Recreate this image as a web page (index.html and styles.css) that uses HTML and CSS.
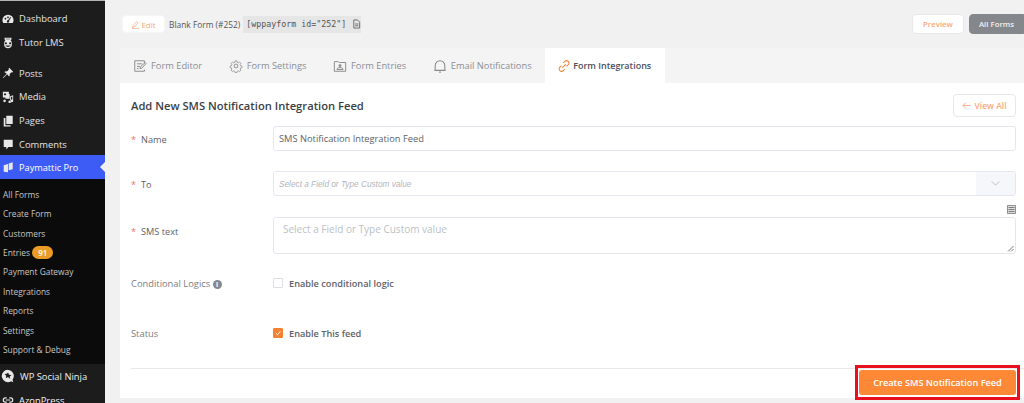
FILE: index.html
```html
<!DOCTYPE html>
<html lang="en">
<head>
<meta charset="utf-8">
<title>Paymattic Pro</title>
<link rel="stylesheet" href="styles.css">
</head>
<body>
<div class="app">
  <aside class="sidebar">
    <ul class="menu menu-top">
      <li class="item"><svg class="mi" viewBox="0 0 14 14"><path fill-rule="evenodd" d="M7 2a6.500 6.500 0 0 0-6.500 6.500c0 1.300.4 2.400 1 3.300h11c.6-.9 1-2 1-3.300A6.500 6.500 0 0 0 7 2zM4 5.500a1 1 0 1 1-.01 0zM7 4a1 1 0 1 1-.01 0zm3.600 1.200L8.200 9.100a1.400 1.400 0 1 1-1.100-.6L9.800 4.800z"/></svg><span>Dashboard</span></li>
      <li class="item"><svg class="mi" viewBox="0 0 14 14"><path fill-rule="evenodd" d="M3 1h8v2l-1 .8c1 .9 1.500 2 1.500 3.200v2c0 2.500-2 4-4.500 4s-4.500-1.500-4.500-4V7c0-1.200.5-2.300 1.500-3.200L3 3zm1.500 1v.6h5V2zM4.500 6a1.300 1.300 0 1 0 .01 0zm5 0a1.300 1.300 0 1 0 .01 0zM4 10c.6 1.200 1.700 1.700 3 1.700s2.400-.5 3-1.700z"/></svg><span>Tutor LMS</span></li>
    </ul>
    <ul class="menu menu-mid">
      <li class="item"><svg class="mi" viewBox="0 0 14 14"><path d="M8.500 1l4.500 4.500-1 .8-.8-.3-2.400 2.200c.5 1.300.2 2.300-.5 3L6 8.500 2 12.500 1 13l.5-1 4-4-2.700-2.300c.7-.7 1.700-1 3-.5L8 2.800l-.3-.8z"/></svg><span>Posts</span></li>
      <li class="item"><svg class="mi" viewBox="0 0 14 14"><path fill-rule="evenodd" d="M1 1h7v2.500h1V9H4V7.500H1zm2.500 1.500a1.300 1.300 0 1 0 .01 0zM13 5v6.500a1.500 1.500 0 1 1-1-1.400V6.500l-1.500.4v5.600a1.500 1.500 0 1 1-1-1.400V6zM3 10a1.500 1.500 0 1 1-.01 0z"/></svg><span>Media</span></li>
      <li class="item"><svg class="mi" viewBox="0 0 14 14"><path d="M5 1h7.500v9.500H5zM2 3.500h2V12h6v1.500H2z"/></svg><span>Pages</span></li>
      <li class="item"><svg class="mi" viewBox="0 0 14 14"><path d="M2 2h10.500v8.500H7.500L5 13.500v-3H2z"/></svg><span>Comments</span></li>
      <li class="item item-active"><svg class="mi" viewBox="0 0 14 14"><path d="M2 5l5-1.500V13l-5-.5zM7.800 3L12.500 1.500v8l-4.700 1.300z"/></svg><span>Paymattic Pro</span></li>
    </ul>
    <ul class="submenu">
      <li>All Forms</li>
      <li>Create Form</li>
      <li>Customers</li>
      <li>Entries <b class="badge">91</b></li>
      <li>Payment Gateway</li>
      <li>Integrations</li>
      <li>Reports</li>
      <li>Settings</li>
      <li>Support &amp; Debug</li>
    </ul>
    <ul class="menu menu-bottom">
      <li class="item item-strong"><svg class="mi mi-lg" viewBox="0 0 16 16"><path fill-rule="evenodd" d="M8 1a7 7 0 1 0 3.500 13L14 15l-.8-2.800A7 7 0 0 0 8 1zm0 3l1.200 2.500 2.800.3-2 1.900.5 2.800L8 9.200l-2.500 1.300.5-2.800-2-1.900 2.800-.3z"/></svg><span>WP Social Ninja</span></li>
      <li class="item item-strong"><svg class="mi" viewBox="0 0 14 14"><path fill="none" stroke="#e8e8e8" stroke-width="1.400" d="M5.500 4.500H4a2.500 2.500 0 0 0 0 5h1.500M8.500 4.500H10a2.500 2.500 0 0 1 0 5H8.500M4.500 7h5"/></svg><span>AzonPress</span></li>
    </ul>
  </aside>
  <main class="main">
    <header class="topbar">
      <button class="btn btn-edit"><svg class="edit-ic" viewBox="0 0 10 10"><path d="M1.500 8.500l.5-2L6.500 1.500 8 3 3.500 8zM1 9.500h8" fill="none" stroke="#f9a77b" stroke-width=".8"/></svg>Edit</button>
      <span class="form-name">Blank Form (#252)</span>
      <code class="shortcode">[wppayform id="252"] <svg class="doc-ic" viewBox="0 0 10 10"><path d="M2 .5h4l2.500 2.500v6.500H2zM3.500 5h3.500M3.500 7h3.500" fill="none" stroke="#555" stroke-width=".9"/></svg></code>
      <div class="top-actions">
        <button class="btn btn-preview">Preview</button>
        <button class="btn btn-forms">All Forms</button>
      </div>
    </header>
    <section class="panel">
      <nav class="tabs">
        <a class="tab"><svg class="tab-ic" viewBox="0 0 16 16"><path d="M13 5V2H2v12h11v-2M4.500 5.500h6M4.500 8.500h3.500M4.500 11h2M8 11l.5-2L14 4l1 1.200-5 5.300z" fill="none" stroke="#8a8a8a" stroke-width="1.100"/></svg>Form Editor</a>
        <a class="tab"><svg class="tab-ic" viewBox="0 0 16 16"><circle cx="8" cy="8" r="2.200" fill="none" stroke="#8a8a8a" stroke-width="1.100"/><path d="M6.800 1.500h2.400l.4 1.800 1.300.6 1.600-1 1.700 1.700-1 1.600.6 1.300 1.700.4v2.200l-1.700.4-.6 1.300 1 1.600-1.700 1.700-1.600-1-1.300.6-.4 1.700H6.800l-.4-1.700-1.300-.6-1.600 1-1.700-1.700 1-1.600-.6-1.300-1.700-.4V8.100l1.700-.4.600-1.300-1-1.600 1.700-1.700 1.600 1 1.300-.6z" fill="none" stroke="#8a8a8a" stroke-width="1" transform="translate(.8 .8) scale(.9)"/></svg>Form Settings</a>
        <a class="tab"><svg class="tab-ic" viewBox="0 0 16 16"><path d="M1.500 3H6l1 1h7.500v10h-13zM4.500 12c0-3 7-3 7 0z" fill="none" stroke="#8a8a8a" stroke-width="1.100"/><circle cx="8" cy="7.500" r="1.600" fill="#8a8a8a"/></svg>Form Entries</a>
        <a class="tab"><svg class="tab-ic" viewBox="0 0 16 16"><path d="M2.500 13V7.500a5.500 5.500 0 0 1 11 0V13zM1.500 13h13M7 15h2" fill="none" stroke="#8a8a8a" stroke-width="1.200"/></svg>Email Notifications</a>
        <a class="tab tab-active"><svg class="tab-ic tab-ic-sm" viewBox="0 0 14 14"><path d="M6 3.500l1.800-1.800a2.800 2.800 0 0 1 4 4L10 7.500M8 10.500l-1.800 1.800a2.800 2.800 0 0 1-4-4L4 6.500M5 9l4-4" fill="none" stroke="#f58133" stroke-width="1.200"/></svg>Form Integrations</a>
      </nav>
      <div class="content">
        <div class="content-head">
          <h1>Add New SMS Notification Integration Feed</h1>
          <button class="btn btn-view"><svg class="arrow" viewBox="0 0 9 7"><path d="M8.500 3.500H1M3.800.7L1 3.500l2.800 2.800" fill="none" stroke="#f9a77b" stroke-width=".9"/></svg>View All</button>
        </div>
        <div class="row row-name">
          <label class="lbl lbl-to"><i>*</i>Name</label>
          <input class="field" value="SMS Notification Integration Feed" readonly>
        </div>
        <div class="row row-to">
          <label class="lbl lbl-to"><i>*</i>To</label>
          <div class="field select"><em>Select a Field or Type Custom value</em><span class="append"><svg class="chev" viewBox="0 0 10 6"><path d="M.5.500L5 5 9.500.5" fill="none" stroke="#a8abb2" stroke-width=".9"/></svg></span></div>
        </div>
        <div class="list-ic-row"><svg class="list-ic" viewBox="0 0 9 9"><path d="M.5.500h8v8h-8z" fill="#ddd" stroke="#777" stroke-width=".8"/><path d="M1.500 2.500h6M1.500 4.500h6M1.500 6.500h6" stroke="#666" stroke-width=".8"/></svg></div>
        <div class="row row-sms">
          <label class="lbl lbl-sms"><i>*</i>SMS text</label>
          <div class="field area">Select a Field or Type Custom value<svg class="grip" viewBox="0 0 7 7"><path d="M6.500 1L1 6.500M6.500 4L4 6.500" stroke="#666" stroke-width=".9"/></svg></div>
        </div>
        <div class="row row-cond">
          <label class="lbl lbl-plain">Conditional Logics <span class="info">i</span></label>
          <div class="check"><span class="box"></span>Enable conditional logic</div>
        </div>
        <div class="row row-status">
          <label class="lbl lbl-plain">Status</label>
          <div class="check"><span class="box box-on"><svg viewBox="0 0 9 9"><path d="M2 4.500l2 2 3.200-4" fill="none" stroke="#fff" stroke-width="1"/></svg></span>Enable This feed</div>
        </div>
        <div class="footer">
          <button class="btn btn-create">Create SMS Notification Feed</button>
        </div>
      </div>
    </section>
  </main>
</div>
</body>
</html>
```
FILE: styles.css
```css
* { box-sizing: border-box; }
html, body { margin: 0; padding: 0; height: 403px; overflow: hidden; background: #f1f1f1; }
body { font-family: "Open Sans", "Liberation Sans", sans-serif; color: #606266; }
ul { list-style: none; margin: 0; padding: 0; }
button { font-family: inherit; cursor: pointer; }

.app { display: flex; height: 403px; }

.sidebar { width: 105px; flex: none; background: #1c1c1c; border-top: 1px solid #b5b5b5; color: #e4e4e4; font-size: 9.400px; padding-top: 6px; overflow: hidden; }
.menu { display: flex; flex-direction: column; }
.menu-top { margin-bottom: 7px; }
.item { display: flex; align-items: center; height: 23.700px; padding-left: 1.500px; gap: 5.500px; white-space: nowrap; position: relative; }
.mi { width: 12px; height: 12px; fill: #e8e8e8; flex: none; }
.mi-lg { width: 14px; height: 14px; margin-left: -1px; }
.item-active { background: #3d5cf5; color: #fff; height: 24px; margin-top: -1px; font-size: 9.200px; }
.item-active::after { content: ""; position: absolute; right: 0; top: 7px; border: 5px solid transparent; border-right-color: #f1f1f1; border-left-width: 0; }
.submenu { background: #0b0b0b; padding: 5.500px 0 4.500px; font-size: 8.400px; color: #c6c6c6; }
.submenu li { height: 19.450px; line-height: 19.450px; padding-left: 3px; white-space: nowrap; }
.badge { display: inline-block; height: 13px; line-height: 13px; padding: 0 6px; border-radius: 7px; background: #ec9c26; color: #fff; font-size: 8px; font-weight: 600; vertical-align: 0; }
.item-strong { color: #f0f0f0; font-size: 9.400px; }
.menu-bottom .item { height: 24px; }

.main { flex: 1; min-width: 0; display: flex; flex-direction: column; padding-left: 15px; }
.topbar { display: flex; align-items: center; height: 48px; padding-left: 2px; flex: none; }
.btn { border: 1px solid #e8e8e8; border-radius: 4px; background: #fff; font-size: 7.800px; }
.btn-edit { width: 43px; height: 18px; padding: 0; color: #f9a77b; display: flex; align-items: center; justify-content: center; gap: 1px; margin-right: 4px; border-color: #f6f6f6; font-size: 8px; }
.edit-ic { width: 9px; height: 9px; }
.form-name { font-size: 8.400px; color: #555; margin-right: 3px; white-space: nowrap; }
.shortcode { font-family: "DejaVu Sans Mono", monospace; font-size: 8.300px; background: #e6e6e6; color: #555; height: 17px; line-height: 17px; padding: 0 3px; white-space: nowrap; display: flex; align-items: center; gap: 6px; width: 118px; }
.doc-ic { width: 9px; height: 10px; flex: none; }
.top-actions { margin-left: auto; display: flex; gap: 5px; }
.btn-preview { width: 52px; height: 20px; color: #f9a77b; font-weight: 600; }
.btn-forms { width: 55px; height: 20px; background: #84878c; border-color: #84878c; color: #f2f2f2; font-weight: 600; border-radius: 4px 0 0 4px; }

.panel { flex: 1; display: flex; flex-direction: column; margin-bottom: 5px; min-height: 0; }
.tabs { height: 35px; flex: none; display: flex; align-items: stretch; background: #f4f4f4; padding-left: 13px; font-size: 9.300px; font-weight: 500; color: #8b8e94; }
.tab { display: flex; align-items: center; gap: 4px; margin-right: 26.600px; white-space: nowrap; }
.tab-ic { width: 14px; height: 14px; flex: none; }
.tab-ic-sm { width: 12px; height: 12px; }
.tab-active { background: #fff; color: #4d5058; margin: 0 0 0 -13px; padding: 0 14px 0 13px; gap: 3px; font-weight: 600; font-size: 9px; }

.content { flex: 1; background: #fff; padding: 11px 8px 0 11px; display: flex; flex-direction: column; min-height: 0; }
.content-head { display: flex; justify-content: space-between; align-items: flex-start; height: 32px; flex: none; }
h1 { margin: 4px 0 0; font-size: 11.200px; font-weight: 600; color: #3c3f46; white-space: nowrap; }
.btn-view { width: 63px; height: 23px; color: #f9a77b; font-weight: 600; font-size: 8.500px; padding: 0; display: flex; align-items: center; justify-content: center; gap: 3px; }
.arrow { width: 9px; height: 7px; }

.row { display: flex; align-items: center; flex: none; }
.lbl { width: 142px; flex: none; font-size: 9.200px; color: #606266; white-space: nowrap; }
.lbl i { color: #f56c6c; font-style: normal; display: inline-block; width: 10px; font-size: 9px; }
.lbl-sms { align-self: flex-start; padding-top: 8px; }
.lbl-to { padding-top: 1px; }
.field { flex: 1; min-width: 0; border: 1px solid #e4e7ed; border-radius: 3px; background: #fff; font-family: inherit; font-size: 9.300px; color: #606266; outline: none; }
input.field { height: 25px; padding: 0 5px; }
.row-name { height: 25px; }
.row-to { height: 25px; margin-top: 20px; }
.select { height: 25px; display: flex; align-items: stretch; justify-content: space-between; padding-left: 5px; overflow: hidden; }
.select em { font-family: "Liberation Sans", sans-serif; font-size: 8.250px; color: #b3b6bd; align-self: center; padding-top: 1px; }
.append { width: 39px; background: #f5f7fa; display: flex; align-items: center; justify-content: center; }
.chev { width: 9px; height: 5px; }
.list-ic-row { display: flex; justify-content: flex-end; height: 21px; padding-top: 9px; flex: none; }
.list-ic { width: 9px; height: 9px; }
.row-sms { height: 37px; }
.area { height: 37px; padding: 4px 9px; font-size: 10px; color: #bcbfc6; position: relative; }
.grip { position: absolute; right: 1px; bottom: 1px; width: 7px; height: 7px; }
.row-cond { margin-top: 19px; height: 20px; }
.row-status { margin-top: 30px; height: 20px; }
.lbl-plain { color: #7a7d84; font-size: 9.350px; }
.info { display: inline-flex; width: 9px; height: 9px; border-radius: 50%; background: #85888e; color: #fff; font-size: 7px; font-weight: 700; align-items: center; justify-content: center; vertical-align: 0; }
.check { display: flex; align-items: center; gap: 6.500px; font-size: 9.200px; font-weight: 600; color: #5f6268; }
.box { width: 10px; height: 10px; border: 1px solid #dcdfe6; border-radius: 1px; background: #fff; display: block; margin-left: -0.500px; }
.box-on { background: #f58133; border-color: #f58133; }
.box-on svg { display: block; width: 8px; height: 8px; }
.footer { margin-top: 25px; border-top: 1px solid #e8e9ec; display: flex; justify-content: flex-end; padding-top: 1px; margin-right: -8px; padding-right: 8px; }
.btn-create { width: 157px; height: 25px; background: #fd8937; border: none; border-radius: 3px; color: #fff; font-size: 9.200px; font-weight: 600; padding: 0; position: relative; }
.btn-create::after { content: ""; position: absolute; inset: -5px -4px; border: 3px solid #e8101f; }
```
